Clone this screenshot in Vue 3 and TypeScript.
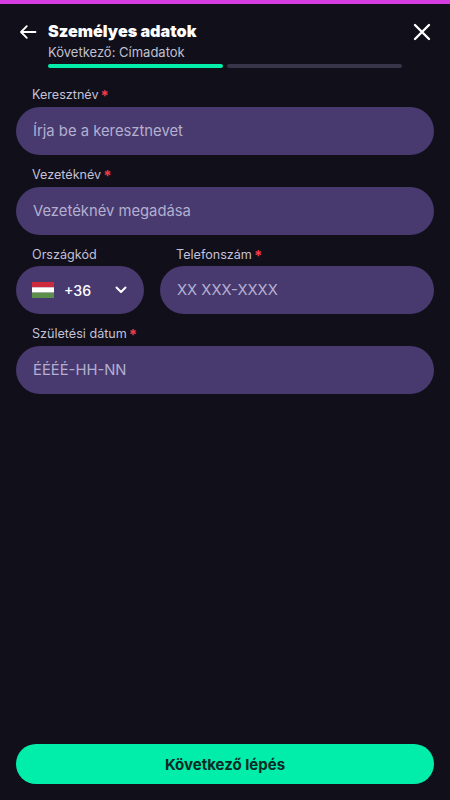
<script setup lang="ts">
interface Field {
  label: string
  placeholder: string
}
const firstFields: Field[] = [
  { label: 'Keresztnév', placeholder: 'Írja be a keresztnevet' },
  { label: 'Vezetéknév', placeholder: 'Vezetéknév megadása' },
]
</script>

<template>
  <div class="page">
    <header class="header">
      <button class="icon-btn back" type="button" aria-label="Vissza">
        <svg width="20" height="20" viewBox="0 0 20 20" fill="none">
          <path d="M17.500 11H3M8.800 5.200L3 11l5.800 5.800" stroke="#fff" stroke-width="1.800" stroke-linecap="round" stroke-linejoin="round" />
        </svg>
      </button>
      <div class="heading">
        <h1 class="title">Személyes adatok</h1>
        <p class="next">Következő: Címadatok</p>
        <div class="progress">
          <span class="bar active"></span>
          <span class="bar"></span>
        </div>
      </div>
      <button class="icon-btn close" type="button" aria-label="Bezárás">
        <svg width="20" height="20" viewBox="0 0 20 20" fill="none">
          <path d="M3 3l14 14M17 3L3 17" stroke="#fff" stroke-width="2.400" stroke-linecap="round" />
        </svg>
      </button>
    </header>

    <form class="form" @submit.prevent>
      <div v-for="f in firstFields" :key="f.label" class="field">
        <label class="label">{{ f.label }}<span class="req">*</span></label>
        <input class="input" type="text" :placeholder="f.placeholder" />
      </div>

      <div class="phone-row">
        <div class="field country">
          <label class="label">Országkód</label>
          <div class="select">
            <svg class="flag" width="22" height="16" viewBox="0 0 22 16">
              <rect width="22" height="5.400" y="0" fill="#cd2a3e" />
              <rect width="22" height="5.400" y="5.300" fill="#ffffff" />
              <rect width="22" height="5.400" y="10.600" fill="#5d8f4c" />
            </svg>
            <span class="code">+36</span>
            <svg class="chev" width="12" height="8" viewBox="0 0 12 8" fill="none">
              <path d="M1.500 1.500L6 6l4.500-4.500" stroke="#fff" stroke-width="2" stroke-linecap="round" stroke-linejoin="round" />
            </svg>
          </div>
        </div>
        <div class="field phone">
          <label class="label">Telefonszám<span class="req">*</span></label>
          <input class="input" type="text" placeholder="XX XXX-XXXX" />
        </div>
      </div>

      <div class="field">
        <label class="label">Születési dátum<span class="req">*</span></label>
        <input class="input" type="text" placeholder="ÉÉÉÉ-HH-NN" />
      </div>
    </form>

    <footer class="footer">
      <button class="submit" type="button">Következő lépés</button>
    </footer>
  </div>
</template>

<style>
html, body { margin: 0; background: #100f1a; }
</style>

<style scoped>
.page {
  box-sizing: border-box;
  width: 450px;
  height: 800px;
  display: flex;
  flex-direction: column;
  background: #100f1a;
  border-top: 4px solid #d63de0;
  font-family: Inter, "Noto Sans", sans-serif;
  color: #fff;
}
.header {
  display: flex;
  align-items: flex-start;
  padding: 17px 18px 0 18px;
  height: 54px;
  box-sizing: border-box;
}
.icon-btn {
  width: 20px;
  height: 20px;
  padding: 0;
  border: 0;
  background: none;
  flex: none;
}
.back { margin: 0 10px 0 0; }
.close { margin: 1px 0 0 auto; }
.heading { width: 354px; }
.title {
  margin: 0;
  font-size: 16.200px;
  line-height: 20px;
  font-weight: 900;
}
.next {
  margin: 2px 0 0;
  font-size: 13px;
  line-height: 18px;
  font-weight: 400;
  color: #c0c0cf;
}
.progress {
  display: flex;
  gap: 4px;
  margin-top: 3px;
}
.bar {
  flex: 1;
  height: 4px;
  border-radius: 2px;
  background: #38354a;
}
.bar.active { background: #00eeaa; }
.form {
  flex: 1;
  display: flex;
  flex-direction: column;
  padding: 17.400px 16px 0;
}
.field {
  display: flex;
  flex-direction: column;
  min-width: 0;
}
.label {
  height: 31.600px;
  box-sizing: border-box;
  padding: 11px 0 0 16px;
  font-size: 12.600px;
  line-height: 18px;
  color: #c4c0d6;
}
.req {
  margin-left: 2px;
  color: #f23a4a;
  font-size: 15px;
  line-height: 14px;
  font-weight: 700;
  vertical-align: -2px;
}
.input {
  box-sizing: border-box;
  width: 100%;
  height: 48px;
  border: 0;
  outline: 0;
  border-radius: 24px;
  padding: 0 17px;
  background: #483a6f;
  color: #fff;
  font: 400 14.800px Inter, "Noto Sans", sans-serif;
}
.input::placeholder {
  color: #b3afd0;
  opacity: 1;
}
.phone-row {
  display: flex;
  gap: 16px;
}
.country { width: 128px; flex: none; }
.phone { flex: 1; }
.select {
  box-sizing: border-box;
  height: 48px;
  border-radius: 24px;
  background: #483a6f;
  display: flex;
  align-items: center;
  padding: 0 17px 0 16px;
}
.flag { flex: none; }
.code {
  margin-left: 10px;
  font-size: 14.200px;
  font-weight: 500;
}
.chev { margin-left: auto; }
.footer { padding: 0 16px 16px; }
.submit {
  display: block;
  width: 100%;
  height: 40px;
  border: 0;
  border-radius: 20px;
  background: #00eeaa;
  color: #0b2a25;
  font: 700 15px Inter, "Noto Sans", sans-serif;
}
</style>
